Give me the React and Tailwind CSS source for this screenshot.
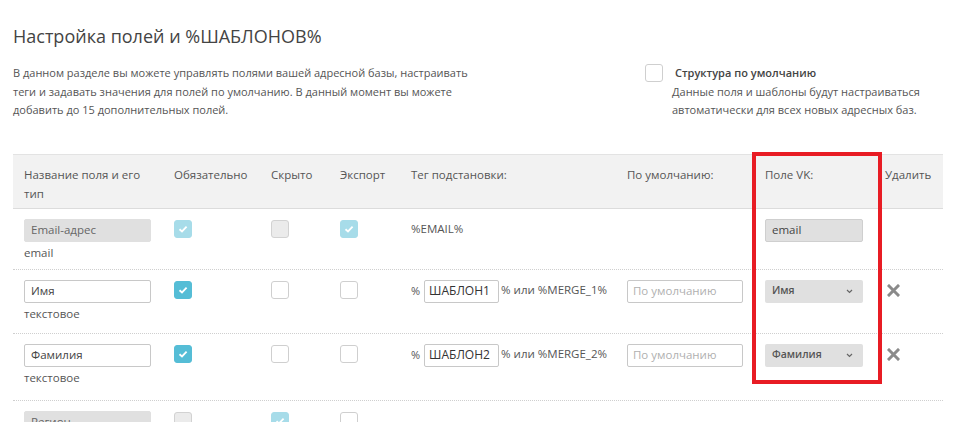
import React from "react";

const cols = "grid grid-cols-[150px_97px_69px_71px_216px_138px_120px_69px]";

function Box({ state }) {
    // state: on, onDim, off, offDim
    const styles = {
        on: "bg-[#55bdd6] border-[#55bdd6]",
        onDim: "bg-[#a7dce9] border-[#a7dce9]",
        off: "bg-white border-[#cfcfcf]",
        offDim: "bg-[#ebebeb] border-[#d2d2d2]",
    };
    const checked = state === "on" || state === "onDim";
    return (
        <div className={"mt-px w-[18px] h-[18px] rounded-[3px] border flex items-center justify-center " + styles[state]}>
            {checked && (
                <svg width="10" height="8" viewBox="0 0 10 8">
                    <path d="M1.5 4.2 L4 6.4 L8.6 1.6" fill="none" stroke="#fff" strokeWidth="1.8" />
                </svg>
            )}
        </div>
    );
}

function Cell({ children, className = "" }) {
    return <div className={"pl-[11px] pt-[10px] " + className}>{children}</div>;
}

function NameInput({ value, dim }) {
    return (
        <div
            className={
                "w-[127px] h-[23px] rounded-[2px] px-[6px] flex items-center text-[11.5px] " +
                (dim ? "bg-[#e0e0e0] border border-[#e0e0e0] text-[#666]" : "bg-white border border-[#c8c8c8] text-[#444]")
            }
        >
            {value}
        </div>
    );
}

function VkSelect({ label }) {
    return (
        <div className="w-[98px] h-[23px] rounded-[2px] bg-[#e0e0e0] pl-[7px] pr-[10px] flex items-center justify-between text-[10.5px] font-semibold text-[#555]">
            <span>{label}</span>
            <svg width="7" height="5" viewBox="0 0 7 5">
                <path d="M1 1 L3.5 3.5 L6 1" fill="none" stroke="#666" strokeWidth="1.2" />
            </svg>
        </div>
    );
}

function DelIcon() {
    return (
        <svg width="13" height="13" viewBox="0 0 13 13" className="mt-[4px] ml-[2px]">
            <path d="M2 2 L11 11 M11 2 L2 11" stroke="#8a8a8a" strokeWidth="3" strokeLinecap="square" />
        </svg>
    );
}

function FieldRow({ name, type, n, h }) {
    return (
        <div className={cols + " border-b border-dotted border-[#cfcfcf] " + h}>
            <Cell>
                <NameInput value={name} />
                <div className="mt-[2px] leading-[18px]">{type}</div>
            </Cell>
            <Cell><Box state="on" /></Cell>
            <Cell><Box state="off" /></Cell>
            <Cell><Box state="off" /></Cell>
            <Cell className="flex items-start">
                <div className="flex items-center h-[23px]">
                    <span className="text-[11px] mr-[4px]">%</span>
                    <div className="w-[75px] h-[23px] border border-[#c8c8c8] rounded-[2px] px-[4px] flex items-center text-[12px] text-[#333]">
                        ШАБЛОН{n}
                    </div>
                    <span className="ml-[2px] text-[11.5px] -mt-[2px]">% или %MERGE_{n}%</span>
                </div>
            </Cell>
            <Cell>
                <div className="w-[116px] h-[23px] border border-[#c8c8c8] rounded-[2px] px-[5px] flex items-center text-[11.5px] text-[#b0b0b0]">
                    По умолчанию
                </div>
            </Cell>
            <Cell><VkSelect label={name} /></Cell>
            <Cell><DelIcon /></Cell>
        </div>
    );
}

export default function App() {
    return (
        <div className="relative h-[422px] overflow-hidden bg-white text-[#555] font-['Open_Sans',sans-serif] text-[11.5px]">
            <div className="px-[13px] pt-[22px]">
                <h1 className="text-[18px] leading-[28px] text-[#444] font-normal">Настройка полей и %ШАБЛОНОВ%</h1>

                <div className="mt-[14px] flex justify-between">
                    <p className="w-[470px] leading-[18.5px] text-[11px]">
                        В данном разделе вы можете управлять полями вашей адресной базы, настраивать теги и задавать значения для полей по умолчанию. В данный момент вы можете добавить до 15 дополнительных полей.
                    </p>
                    <div className="w-[295px] flex gap-[9px]">
                        <div className="w-[18px] h-[18px] shrink-0 rounded-[3px] border border-[#cfcfcf] bg-white" />
                        <div className="leading-[18.5px] text-[11px]">
                            <div className="ml-[3px] font-semibold text-[#444]">Структура по умолчанию</div>
                            <div>Данные поля и шаблоны будут настраиваться автоматически для всех новых адресных баз.</div>
                        </div>
                    </div>
                </div>

                {/* таблица полей */}
                <div className="mt-[34px] w-[930px]">
                    <div className={cols + " h-[55px] bg-[#f2f2f2] border-t border-[#e3e3e3] border-b border-b-[#dcdcdc] leading-[19px]"}>
                        <Cell className="pr-[10px]">Название поля и его тип</Cell>
                        <Cell>Обязательно</Cell>
                        <Cell>Скрыто</Cell>
                        <Cell>Экспорт</Cell>
                        <Cell>Тег подстановки:</Cell>
                        <Cell>По умолчанию:</Cell>
                        <Cell>Поле VK:</Cell>
                        <Cell>Удалить</Cell>
                    </div>

                    <div className={cols + " h-[61px] border-b border-dotted border-[#cfcfcf]"}>
                        <Cell>
                            <NameInput value="Email-адрес" dim />
                            <div className="mt-[2px] leading-[18px]">email</div>
                        </Cell>
                        <Cell><Box state="onDim" /></Cell>
                        <Cell><Box state="offDim" /></Cell>
                        <Cell><Box state="onDim" /></Cell>
                        <Cell><div className="h-[20px] flex items-center">%EMAIL%</div></Cell>
                        <Cell />
                        <Cell>
                            <div className="w-[98px] h-[23px] rounded-[2px] bg-[#e0e0e0] border border-[#cfcfcf] px-[6px] flex items-center text-[11.5px] text-[#444]">
                                email
                            </div>
                        </Cell>
                        <Cell />
                    </div>

                    <FieldRow name="Имя" type="текстовое" n={1} h="h-[64px]" />
                    <FieldRow name="Фамилия" type="текстовое" n={2} h="h-[67px]" />

                    <div className={cols + " h-[64px]"}>
                        <Cell><NameInput value="Регион" dim /></Cell>
                        <Cell><Box state="offDim" /></Cell>
                        <Cell><Box state="onDim" /></Cell>
                        <Cell><Box state="off" /></Cell>
                        <Cell><div className="pt-[8px]">-</div></Cell>
                        <Cell />
                        <Cell />
                        <Cell />
                    </div>
                </div>
            </div>

            {/* красная рамка вокруг колонки VK */}
            <div className="absolute left-[752px] top-[152px] w-[130px] h-[232px] border-[4px] border-[#e81c24]" />
        </div>
    );
}
